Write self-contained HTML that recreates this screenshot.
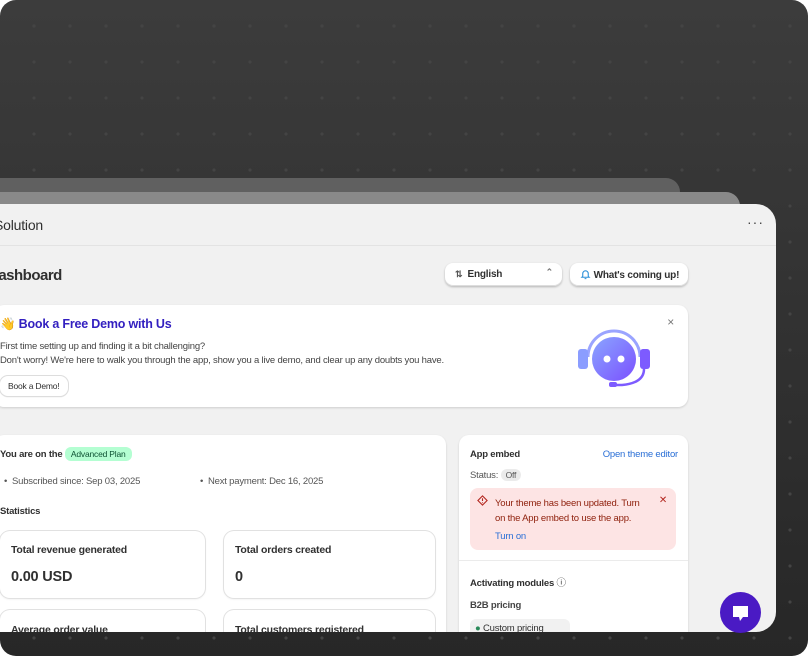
<!DOCTYPE html>
<html><head><style>
*{box-sizing:border-box;margin:0;padding:0}
body{width:808px;height:656px;background:#fff;font-family:"Liberation Sans",sans-serif;overflow:hidden;position:relative;letter-spacing:-0.2px}
.bg{position:absolute;inset:0;border-radius:16px;background-color:#2d2d2d;background-image:radial-gradient(circle,#444 1.3px,transparent 1.9px),linear-gradient(#3c3c3c,#272727);background-size:36px 36px,100% 100%;background-position:16px 8px,0 0}
.c1{position:absolute;left:-20px;top:178px;width:700px;height:40px;background:#606060;border-radius:14px}
.c2{position:absolute;left:-20px;top:192px;width:760px;height:40px;background:#898989;border-radius:14px}
.main{position:absolute;left:-30px;top:204px;width:806px;height:428px;background:#f1f1f1;border-radius:0 20px 20px 0;overflow:hidden}
.hdr{height:42px;border-bottom:1px solid #e3e3e3;font-size:14px;color:#303030;padding:13px 0 0 24px}
.dots{position:absolute;right:12px;top:10px;font-size:14px;color:#444;letter-spacing:1px}
.abs{position:absolute;white-space:nowrap}
.card{position:absolute;background:#fff;border-radius:10px;box-shadow:0 1px 2px rgba(0,0,0,.15)}
.btn{position:absolute;background:#fff;border-radius:8px;box-shadow:0 1px 2px rgba(0,0,0,.25),inset 0 -1px 0 #ddd;font-size:10px;font-weight:bold;color:#303030;white-space:nowrap}
.t{font-size:9.5px;color:#303030}
.b{font-weight:bold}
</style></head><body>
<div class="bg"></div>
<div class="c1"></div><div class="c2"></div>
<div class="main">
 <div class="hdr">Solution</div>
 <div class="dots">···</div>
 <div class="abs b" style="left:18px;top:63px;font-size:15px;color:#303030;letter-spacing:-0.5px">Dashboard</div>
 <div class="btn" style="left:475px;top:59px;width:117px;height:23px;padding:6px 0 0 10px"><span style="font-size:9px;color:#555">⇅</span>&nbsp; English<span style="position:absolute;right:9px;top:4px;font-size:9px;color:#777">⌃</span></div>
 <div class="btn" style="left:600px;top:59px;width:118px;height:23px;padding:6px 0 0 10px"><svg width="11" height="11" viewBox="0 0 12 12" style="vertical-align:-2px"><path d="M3 8V5a3 3 0 0 1 6 0v3l1 1H2z M5 10.5h2" fill="none" stroke="#2a8fd8" stroke-width="1.2"/></svg> What's coming up!</div>
 <div class="card" style="left:24px;top:101px;width:694px;height:102px">
  <div class="abs b" style="left:6px;top:12px;font-size:12.5px;color:#3320c0">👋 Book a Free Demo with Us</div>
  <div class="abs t" style="left:6px;top:35px;line-height:14px;color:#444;font-size:9.5px">First time setting up and finding it a bit challenging?<br>Don't worry! We're here to walk you through the app, show you a live demo, and clear up any doubts you have.</div>
  <div class="btn" style="left:6px;top:71px;width:68px;height:20px;font-weight:normal;font-size:8.5px;padding:5px 0 0 8px;box-shadow:0 0 0 1px #ddd,0 1px 1px rgba(0,0,0,.2)">Book a Demo!</div>
  <div class="abs" style="right:14px;top:10px;font-size:12px;color:#777">×</div>
  <svg class="abs" style="left:584px;top:16px" width="76" height="66" viewBox="0 0 76 66"><defs><linearGradient id="g" x1="0" y1="0" x2="1" y2="1"><stop offset="0" stop-color="#8aa6ff"/><stop offset="1" stop-color="#7b4fff"/></linearGradient></defs><path d="M10 36a26 26 0 0 1 52 0" fill="none" stroke="#9aa4ff" stroke-width="3"/><rect x="0" y="28" width="10" height="20" rx="3" fill="#8b9dff"/><rect x="62" y="28" width="10" height="20" rx="3" fill="#7d5bff"/><circle cx="36" cy="38" r="22" fill="url(#g)"/><circle cx="29" cy="38" r="3.5" fill="#fff"/><circle cx="43" cy="38" r="3.5" fill="#fff"/><path d="M66 48q0 14-22 16h-8" fill="none" stroke="#7d5bff" stroke-width="2.5"/><rect x="31" y="61" width="8" height="5" rx="2" fill="#7d5bff"/></svg>
 </div>
 <div class="card" style="left:24px;top:231px;width:452px;height:220px">
  <div class="abs t b" style="left:6px;top:14px">You are on the <span style="font-weight:normal;background:#b4fed2;color:#0c5132;padding:2px 6px;border-radius:6px;font-size:8.5px">Advanced Plan</span></div>
  <div class="abs t" style="left:10px;top:41px;color:#555">• &nbsp;Subscribed since: Sep 03, 2025</div>
  <div class="abs t" style="left:206px;top:41px;color:#555">• &nbsp;Next payment: Dec 16, 2025</div>
  <div class="abs t b" style="left:6px;top:71px">Statistics</div>
  <div class="card" style="left:6px;top:96px;width:205px;height:67px;box-shadow:0 0 0 1px #e1e1e1,0 1px 2px rgba(0,0,0,.1)"><div class="abs t b" style="left:11px;top:13px;font-size:10.5px">Total revenue generated</div><div class="abs b" style="left:11px;top:38px;font-size:14.5px;color:#303030">0.00 USD</div></div>
  <div class="card" style="left:230px;top:96px;width:211px;height:67px;box-shadow:0 0 0 1px #e1e1e1,0 1px 2px rgba(0,0,0,.1)"><div class="abs t b" style="left:11px;top:13px;font-size:10.5px">Total orders created</div><div class="abs b" style="left:11px;top:38px;font-size:14.5px;color:#303030">0</div></div>
  <div class="card" style="left:6px;top:175px;width:205px;height:67px;box-shadow:0 0 0 1px #e1e1e1"><div class="abs t b" style="left:11px;top:14px;font-size:10.5px">Average order value</div></div>
  <div class="card" style="left:230px;top:175px;width:211px;height:67px;box-shadow:0 0 0 1px #e1e1e1"><div class="abs t b" style="left:11px;top:14px;font-size:10.5px">Total customers registered</div></div>
 </div>
 <div class="card" style="left:489px;top:231px;width:229px;height:220px">
  <div class="abs t b" style="left:11px;top:14px">App embed</div>
  <div class="abs t" style="right:10px;top:14px;color:#2a6fd6">Open theme editor</div>
  <div class="abs t" style="left:11px;top:35px;color:#555">Status: <span style="background:#ebebeb;padding:1px 5px;border-radius:6px;font-size:8.5px">Off</span></div>
  <div class="abs" style="left:11px;top:53px;width:206px;height:62px;background:#fde4e4;border-radius:8px">
   <svg class="abs" style="left:7px;top:7px" width="11" height="11" viewBox="0 0 12 12"><path d="M6 1L11 6L6 11L1 6Z" fill="none" stroke="#b3261e" stroke-width="1.2"/><path d="M6 3.5v3M6 8v.8" stroke="#b3261e" stroke-width="1.2"/></svg>
   <div class="abs t" style="left:25px;top:8px;line-height:15px;color:#8e1f0b">Your theme has been updated. Turn<br>on the App embed to use the app.</div>
   <div class="abs" style="right:9px;top:7px;font-size:10px;color:#b3261e">✕</div>
   <div class="abs t" style="left:25px;top:43px;color:#2a6fd6">Turn on</div>
  </div>
  <div class="abs" style="left:0;top:125px;width:229px;border-top:1px solid #ebebeb"></div>
  <div class="abs t b" style="left:11px;top:140px">Activating modules <span style="font-weight:normal">ⓘ</span></div>
  <div class="abs t" style="left:11px;top:165px;font-weight:bold;color:#444">B2B pricing</div>
  <div class="abs t" style="left:11px;top:184px;width:100px;height:20px;background:#f1f1f1;border-radius:6px;padding:4px 5px"><span style="color:#2a8a5a">●</span> Custom pricing</div>
 </div>
</div>
<div class="abs" style="left:720px;top:592px;width:41px;height:41px;border-radius:50%;background:#4a1ac4">
 <svg width="41" height="41" viewBox="0 0 41 41"><path d="M13 14h15v11h-5l-3 4-1-4h-6z" fill="#fff"/></svg>
</div>
</body></html>
